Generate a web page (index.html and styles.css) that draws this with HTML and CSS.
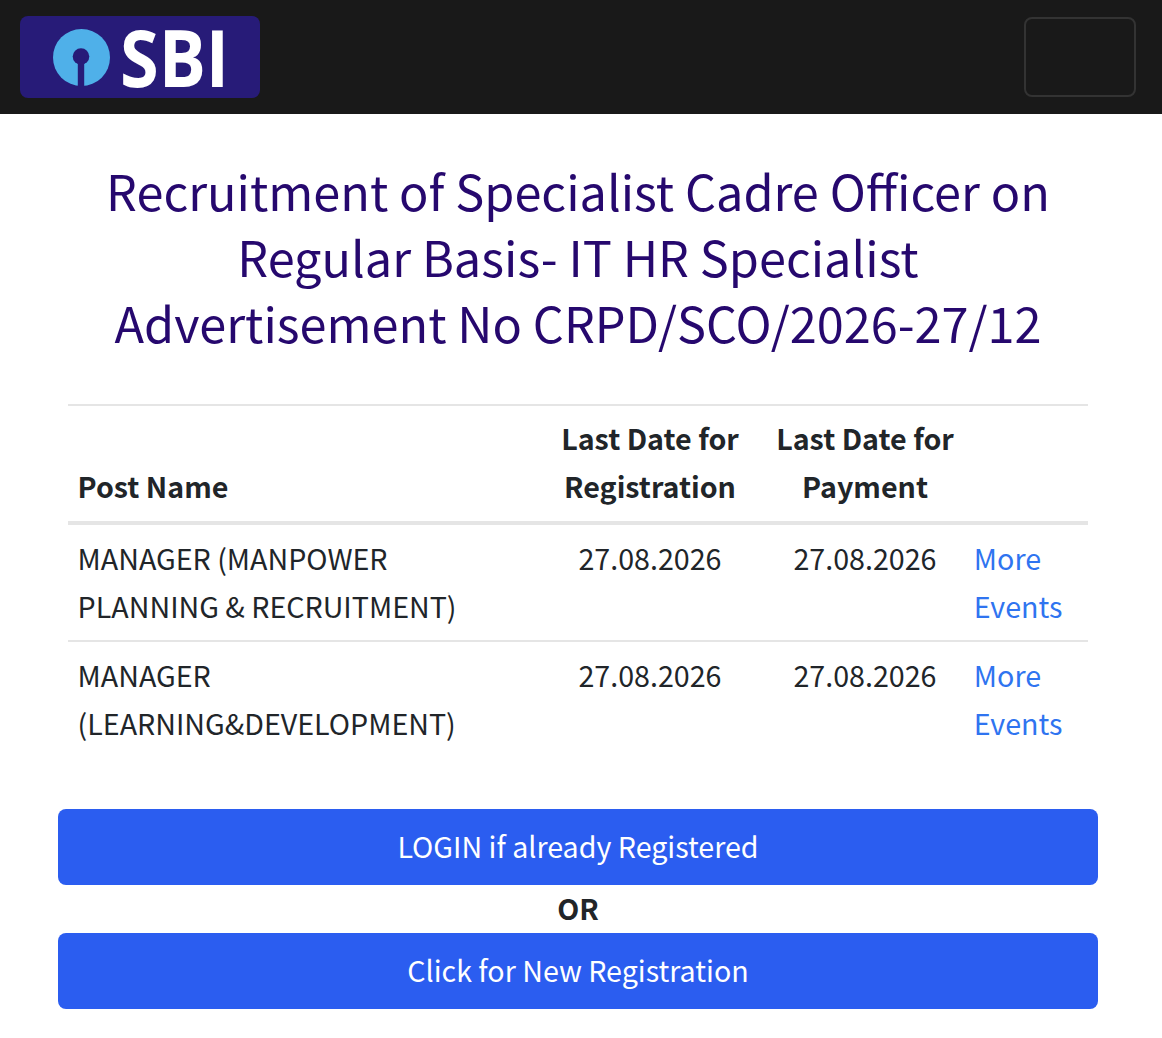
FILE: index.html
```html
<!DOCTYPE html>
<html lang="en">
<head>
<meta charset="utf-8">
<title>SBI Recruitment</title>
<link rel="stylesheet" href="styles.css">
</head>
<body>
<nav class="navbar">
  <div class="logo">
    <svg class="logo-mark" width="57" height="57" viewBox="0 0 57 57"><circle cx="28.5" cy="28.5" r="28.5" fill="#4fb0e9"/><circle cx="28" cy="27.5" r="8.3" fill="#271b78"/><rect x="24.8" y="27" width="6.4" height="30" fill="#271b78"/></svg>
    <span class="logo-text">SBI</span>
  </div>
  <div class="toggler"></div>
</nav>
<main class="content">
  <h1 class="title">Recruitment of Specialist Cadre Officer on Regular Basis- IT HR Specialist<br>Advertisement No CRPD/SCO/2026-27/12</h1>
  <table class="posts">
    <thead>
      <tr><th class="col-name">Post Name</th><th class="col-reg">Last Date for Registration</th><th class="col-pay">Last Date for Payment</th><th class="col-act"></th></tr>
    </thead>
    <tbody>
      <tr><td>MANAGER (MANPOWER PLANNING &amp; RECRUITMENT)</td><td class="mid">27.08.2026</td><td class="mid">27.08.2026</td><td class="link-cell"><a href="#">More Events</a></td></tr>
      <tr><td>MANAGER (LEARNING&amp;DEVELOPMENT)</td><td class="mid">27.08.2026</td><td class="mid">27.08.2026</td><td class="link-cell"><a href="#">More Events</a></td></tr>
    </tbody>
  </table>
  <div class="actions">
    <a class="btn" href="#">LOGIN if already Registered</a>
    <div class="or">OR</div>
    <a class="btn" href="#">Click for New Registration</a>
  </div>
</main>
</body>
</html>
```
FILE: styles.css
```css
* { box-sizing: border-box; }
body { margin: 0; background: #fff; color: #212529; font-family: "Noto Sans CJK JP", "Noto Sans", sans-serif; font-size: 28.64px; line-height: 48px; }
.navbar { height: 114px; background: #191919; display: flex; justify-content: space-between; align-items: center; padding: 0 26px 0 20px; }
.logo { width: 240px; height: 82px; background: #271b78; border-radius: 8px; display: flex; align-items: center; padding-left: 33px; }
.logo-text { color: #fff; font-family: "Open Sans", sans-serif; font-weight: 700; font-size: 78px; line-height: 1; margin-left: 10px; transform: scaleX(0.9); transform-origin: left center; }
.toggler { width: 112px; height: 80px; border: 2px solid #333; border-radius: 8px; }
.content { padding: 43px 64px 0 58px; }
.title { margin: 0 0 49px; font-size: 48.64px; line-height: 66px; font-weight: 400; color: #26086e; text-align: center; }
.posts { width: 1020px; margin: 0 10px; border-collapse: collapse; table-layout: fixed; }
.col-name { width: 467px; text-align: left; }
.col-reg { width: 230px; }
.col-pay { width: 200px; }
.col-act { width: 123px; }
.posts th { font-weight: 700; vertical-align: bottom; padding: 7.6px 9.6px 11.6px; border-top: 2px solid #e5e5e5; border-bottom: 4px solid #e5e5e5; }
.posts td { padding: 8.6px 9.6px 10.6px; vertical-align: top; border-bottom: 2px solid #e5e5e5; }
.posts tr:last-child td { border-bottom: 0; }
.posts .mid { text-align: center; }
.posts .link-cell { padding-left: 8.8px; }
.posts a { color: #2f74f0; text-decoration: none; }
.actions { margin-top: 51px; }
.btn { display: block; height: 76px; line-height: 74px; background: #2b5df0; color: #fff; border-radius: 8px; text-align: center; text-decoration: none; }
.or { text-align: center; line-height: 46px; padding-bottom: 2px; font-weight: 700; }
```
